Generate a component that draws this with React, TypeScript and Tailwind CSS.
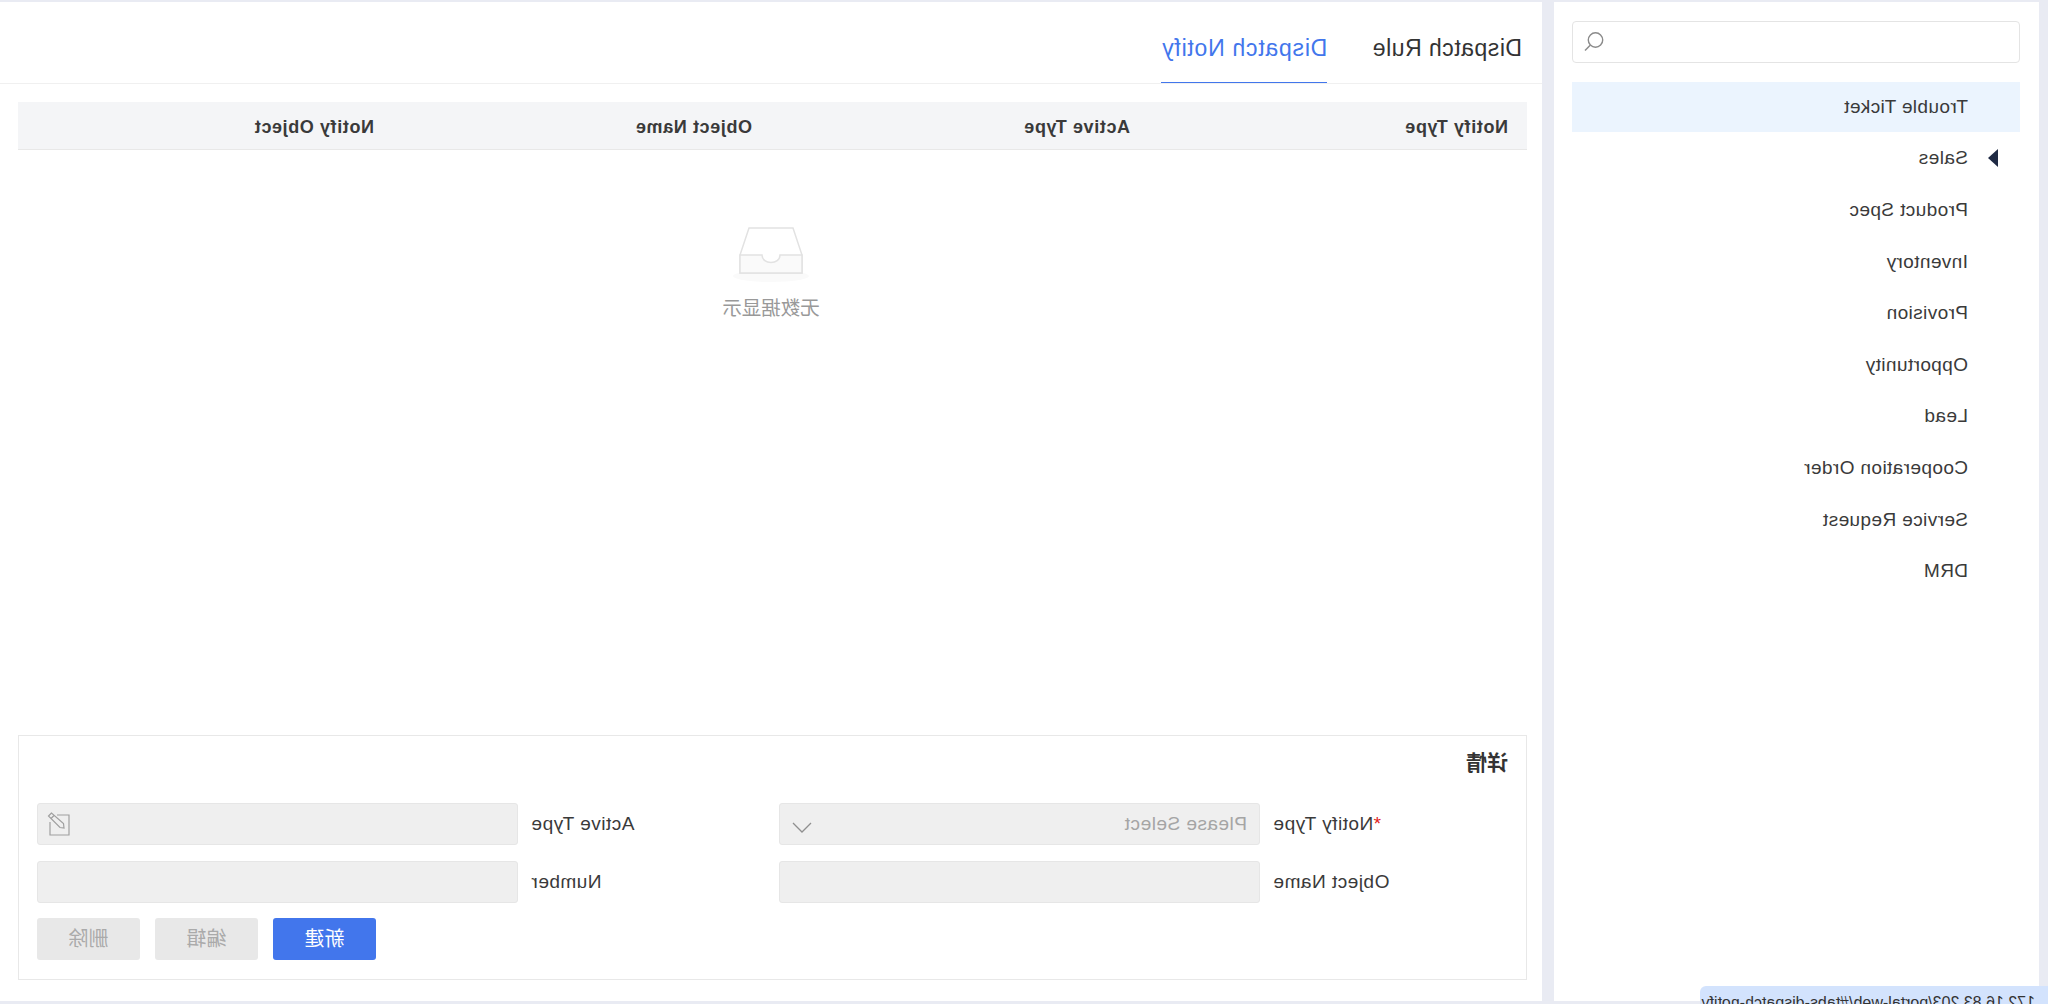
const menu = ['Trouble Ticket', 'Sales', 'Product Spec', 'Inventory', 'Provision', 'Opportunity', 'Lead', 'Cooperation Order', 'Service Request', 'DRM']
const columns = ['Notify Type', 'Active Type', 'Object Name', 'Notify Object']

const SearchIcon = () => (
  <svg width="20" height="20" viewBox="0 0 20 20" fill="none" stroke="#8a8a8a" strokeWidth="1.4">
    <circle cx="8.5" cy="8" r="7.2" />
    <path d="M13.8 13.2L19 18.6" />
  </svg>
)

const ChevronIcon = () => (
  <svg width="20" height="11" viewBox="0 0 20 11" fill="none" stroke="#8f8f8f" strokeWidth="1.3" className="mt-[6px]">
    <path d="M1 1L10 10L19 1" />
  </svg>
)

const PenBoxIcon = () => (
  <svg width="23" height="24" viewBox="0 0 23 24" fill="none" stroke="#a0a0a0" strokeWidth="1.2" className="-mr-[3px]">
    <path d="M13 3H1V23H20V10" />
    <path d="M18.5 1L21.5 4L10 15.5L6 16L6.5 11.5Z" />
    <path d="M16 3.5L19 6.5" />
  </svg>
)

const Sidebar = () => {
  return (
    <aside className="w-[485px] shrink-0 bg-white pl-[19px] pr-[18px] pt-[19px]">
      <div className="flex h-[42px] items-center justify-end rounded-[4px] border border-[#e4e4e4] pr-[11px]">
        <SearchIcon />
      </div>
      <ul className="mt-[19px]">
        {menu.map((item, index) => (
          <li
            key={item}
            className={`relative mb-[1.6px] flex h-[50px] items-center pl-[52px] text-[19px] tracking-[0.4px] text-[#3a3a3a] ${
              index === 0 ? 'bg-[#ebf4fe]' : ''
            }`}
          >
            {item === 'Sales' && (
              <span className="absolute left-[22px] top-[15px] h-0 w-0 border-y-[9px] border-l-[10px] border-y-transparent border-l-[#1f2a44]"></span>
            )}
            {item}
          </li>
        ))}
      </ul>
    </aside>
  )
}

const EmptyState = () => {
  return (
    <div className="flex flex-col items-center pt-[77px]">
      <svg width="80" height="56" viewBox="0 0 80 56" fill="none">
        <ellipse cx="40" cy="49" rx="38" ry="6" fill="#fafafa" />
        <path d="M18 1H62L71 28V46H9V28Z" fill="#fff" stroke="#e2e2e2" strokeWidth="1.5" />
        <path d="M9 28H31C31 38 49 38 49 28H71V46H9Z" fill="#fafafa" stroke="#e2e2e2" strokeWidth="1.5" />
      </svg>
      <div className="mt-[11px] text-[19.5px] leading-[28px] text-[#999]">无数据显示</div>
    </div>
  )
}

const Field = ({ label, labelWidth, children }: { label: React.ReactNode; labelWidth: string; children?: React.ReactNode }) => {
  return (
    <div className="flex items-center">
      <label className={`${labelWidth} mr-[13px] text-right text-[19px] tracking-[0.5px] text-[#3a3a3a]`}>{label}</label>
      <div className="flex h-[42px] w-[481px] items-center justify-between rounded-[3px] border border-[#e6e6e6] bg-[#efefef] px-[12px]">
        {children}
      </div>
    </div>
  )
}

const Details = () => {
  return (
    <section className="mb-[21px] ml-[15px] mr-[18px] mt-auto h-[245px] border border-[#e8e8e8] px-[18px] pt-[13px]">
      <h3 className="text-[21px] font-bold leading-[28px] text-[#333]">详情</h3>
      <div className="mt-[26px] flex">
        <Field
          labelWidth="w-[235px]"
          label={
            <>
              <span className="text-[#e02020]">*</span>Notify Type
            </>
          }
        >
          <span className="text-[19px] tracking-[0.5px] text-[#a5a5a5]">Please Select</span>
          <ChevronIcon />
        </Field>
        <div className="ml-[12px]">
          <Field labelWidth="w-[236px]" label="Active Type">
            <span></span>
            <PenBoxIcon />
          </Field>
        </div>
      </div>
      <div className="mt-[16px] flex">
        <Field labelWidth="w-[235px]" label="Object Name" />
        <div className="ml-[12px]">
          <Field labelWidth="w-[236px]" label="Number" />
        </div>
      </div>
      <div className="mt-[15px] flex justify-end gap-[15px] text-[20px]">
        <button className="h-[42px] w-[103px] rounded-[3px] bg-[#4276ec] text-white">新建</button>
        <button className="h-[42px] w-[103px] rounded-[3px] bg-[#e8e8e8] text-[#aaa]">编辑</button>
        <button className="h-[42px] w-[103px] rounded-[3px] bg-[#e8e8e8] text-[#aaa]">删除</button>
      </div>
    </section>
  )
}

const Main = () => {
  return (
    <main className="flex min-w-0 flex-1 flex-col bg-white">
      <div className="flex h-[82px] gap-[45px] border-b border-[#f0f0f0] pl-[20px] text-[23px] tracking-[0.5px]">
        <div className="flex h-[81px] items-center pt-[12px] text-[#333]">Dispatch Rule</div>
        <div className="flex h-[81px] items-center border-b border-[#4276ec] pt-[12px] tracking-[0.75px] text-[#4276ec]">Dispatch Notify</div>
      </div>
      <div className="ml-[15px] mr-[18px] mt-[18px] grid h-[48px] shrink-0 grid-cols-[repeat(4,378px)] items-center border-b border-[#e8e8e8] bg-[#f4f5f7] pl-[19px] pt-[3px] text-[18px] font-bold tracking-[0.6px] text-[#3a3a3a]">
        {columns.map((col) => (
          <div key={col}>{col}</div>
        ))}
      </div>
      <EmptyState />
      <Details />
    </main>
  )
}

export default function App() {
  return (
    <div className="relative flex h-screen w-full -scale-x-100 gap-[12px] overflow-hidden bg-[#e9ebf3] pb-[3px] pl-[9px] pt-[2px] font-['Liberation_Sans','Noto_Sans_CJK_SC',sans-serif]">
      <Sidebar />
      <Main />
      <div className="absolute left-0 top-[986px] h-[30px] w-[348px] overflow-hidden whitespace-nowrap rounded-tr-[6px] bg-[#d3e3fd] pl-[13px] pt-[5px] text-[16px] leading-[24px] text-[#333]">
        172.16.83.203/portal-web/#tabs-dispatch-notify
      </div>
    </div>
  )
}
